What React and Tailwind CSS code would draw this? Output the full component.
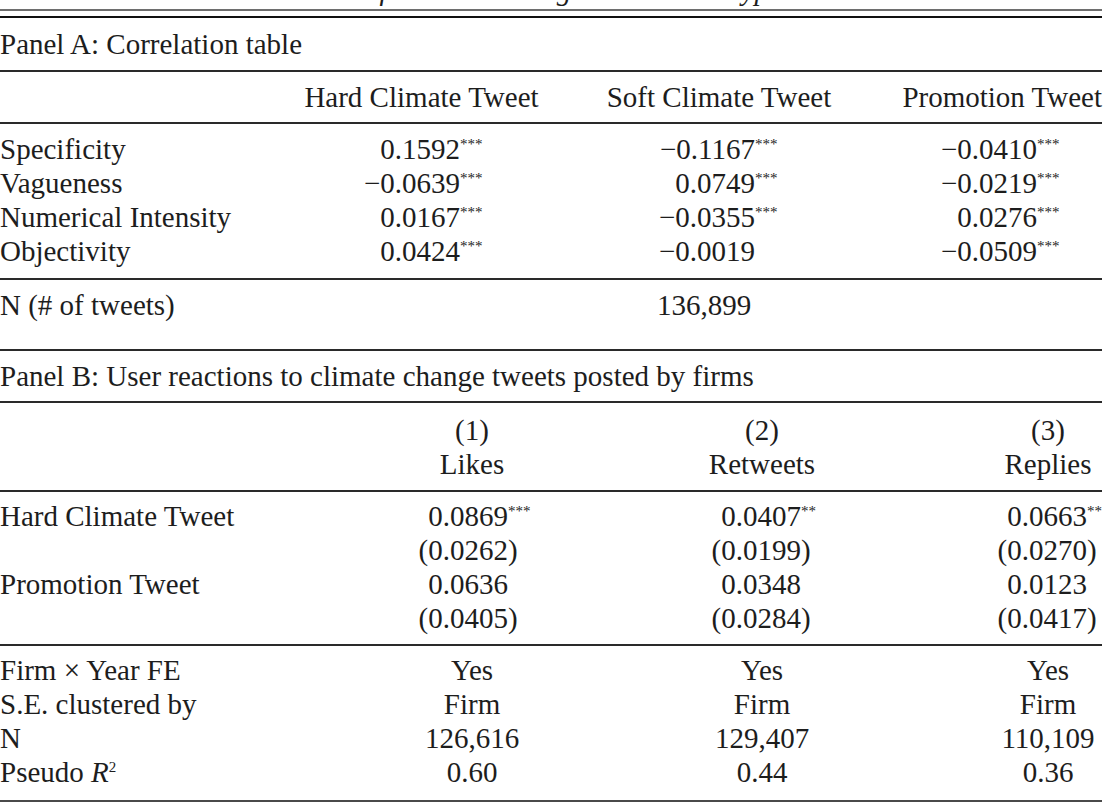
import React from "react";

const Stars = ({ s }) => (
  <span className="relative -top-[10px] text-[15px] leading-none">{s}</span>
);

const Rule = ({ cls = "h-[2px] bg-[#2a2a2a]" }) => <div className={cls} />;

function ACell({ w, box, v, s }) {
  return (
    <div className={`shrink-0 whitespace-nowrap ${w}`}>
      <span className={`inline-block text-right ${box}`}>{v}</span>
      {s ? <Stars s={s} /> : null}
    </div>
  );
}

const aRows = [
  ["Specificity", ["0.1592", "***"], ["−0.1167", "***"], ["−0.0410", "***"]],
  ["Vagueness", ["−0.0639", "***"], ["0.0749", "***"], ["−0.0219", "***"]],
  ["Numerical Intensity", ["0.0167", "***"], ["−0.0355", "***"], ["0.0276", "***"]],
  ["Objectivity", ["0.0424", "***"], ["−0.0019", ""], ["−0.0509", "***"]],
];

function ARow({ r }) {
  return (
    <div className="flex h-[34px] items-center">
      <div className="w-[300px] shrink-0">{r[0]}</div>
      <ACell w="w-[243px]" box="w-[160px]" v={r[1][0]} s={r[1][1]} />
      <ACell w="w-[352px]" box="w-[212px]" v={r[2][0]} s={r[2][1]} />
      <ACell w="w-[207px]" box="w-[142px]" v={r[3][0]} s={r[3][1]} />
    </div>
  );
}

function BVal({ v, suf, s, w, box, ml = "" }) {
  return (
    <div className={`shrink-0 whitespace-nowrap ${w} ${ml}`}>
      <span className={`inline-block text-right ${box}`}>{v}</span>
      {suf ? <span>{suf}</span> : null}
      {s ? <Stars s={s} /> : null}
    </div>
  );
}

function BValRow({ label, vals }) {
  return (
    <div className="flex h-[34px] items-center">
      <div className="w-[368px] shrink-0">{label}</div>
      <BVal w="w-[208px]" box="w-[140px]" {...vals[0]} />
      <BVal w="w-[190px]" box="w-[134px]" ml="ml-[91px]" {...vals[1]} />
      <BVal w="w-[108px]" box="w-[93px]" ml="ml-[137px]" {...vals[2]} />
    </div>
  );
}

function BCenterRow({ label, vals }) {
  return (
    <div className="flex h-[34px] items-center">
      <div className="w-[368px] shrink-0">{label}</div>
      <div className="w-[208px] shrink-0 text-center">{vals[0]}</div>
      <div className="ml-[91px] w-[190px] shrink-0 text-center">{vals[1]}</div>
      <div className="ml-[137px] w-[108px] shrink-0 text-center">{vals[2]}</div>
    </div>
  );
}

export default function App() {
  return (
    <div className="h-[806px] w-[1108px] overflow-hidden bg-white font-['Liberation_Serif',serif] text-[29px] leading-[34px] text-[#1d1d1d]">
      <div className="w-[1102px]">
        <div className="relative h-[9px] overflow-hidden">
          <div className="absolute -top-[27px] left-[155px] whitespace-nowrap italic">
            Table 5—Content of Climate Change Tweets and Type
          </div>
        </div>
        <Rule cls="h-[2px] bg-[#6e6e6e]" />
        <div className="h-[5px]" />
        <Rule cls="h-[2px] bg-[#111111]" />

        {/* Panel A */}
        <div className="flex h-[52px] items-center">Panel A: Correlation table</div>
        <Rule />
        <div className="flex h-[50px] items-center">
          <div className="w-[300px] shrink-0" />
          <div className="w-[243px] shrink-0 text-center">Hard Climate Tweet</div>
          <div className="w-[352px] shrink-0 text-center">Soft Climate Tweet</div>
          <div className="w-[207px] shrink-0 text-right">Promotion Tweet</div>
        </div>
        <Rule />
        <div className="pb-[10px] pt-[8px]">
          {aRows.map((r) => (
            <ARow key={r[0]} r={r} />
          ))}
        </div>
        <Rule />
        <div className="flex h-[50px] items-center">
          <div className="w-[300px] shrink-0">N (# of tweets)</div>
          <div className="w-[243px] shrink-0" />
          <div className="w-[352px] shrink-0 pl-[114px]">136,899</div>
        </div>
        <div className="h-[19px]" />
        <Rule />

        {/* Panel B */}
        <div className="flex h-[50px] items-center">
          Panel B: User reactions to climate change tweets posted by firms
        </div>
        <Rule />
        <div className="pb-[9px] pt-[10px]">
          <BCenterRow label="" vals={["(1)", "(2)", "(3)"]} />
          <BCenterRow label="" vals={["Likes", "Retweets", "Replies"]} />
        </div>
        <Rule />
        <div className="pb-[9px] pt-[7px]">
          <BValRow
            label="Hard Climate Tweet"
            vals={[
              { v: "0.0869", s: "***" },
              { v: "0.0407", s: "**" },
              { v: "0.0663", s: "**" },
            ]}
          />
          <BValRow
            label=""
            vals={[
              { v: "(0.0262", suf: ")" },
              { v: "(0.0199", suf: ")" },
              { v: "(0.0270", suf: ")" },
            ]}
          />
          <BValRow
            label="Promotion Tweet"
            vals={[{ v: "0.0636" }, { v: "0.0348" }, { v: "0.0123" }]}
          />
          <BValRow
            label=""
            vals={[
              { v: "(0.0405", suf: ")" },
              { v: "(0.0284", suf: ")" },
              { v: "(0.0417", suf: ")" },
            ]}
          />
        </div>
        <Rule />
        <div className="pb-[11px] pt-[7px]">
          <BCenterRow label="Firm × Year FE" vals={["Yes", "Yes", "Yes"]} />
          <BCenterRow label="S.E. clustered by" vals={["Firm", "Firm", "Firm"]} />
          <BCenterRow label="N" vals={["126,616", "129,407", "110,109"]} />
          <BCenterRow
            label={
              <span>
                Pseudo <span className="italic">R</span>
                <span className="relative -top-[10px] text-[15px] leading-none">2</span>
              </span>
            }
            vals={["0.60", "0.44", "0.36"]}
          />
        </div>
        <Rule cls="h-[2px] bg-[#4a4a4a]" />
      </div>
    </div>
  );
}
